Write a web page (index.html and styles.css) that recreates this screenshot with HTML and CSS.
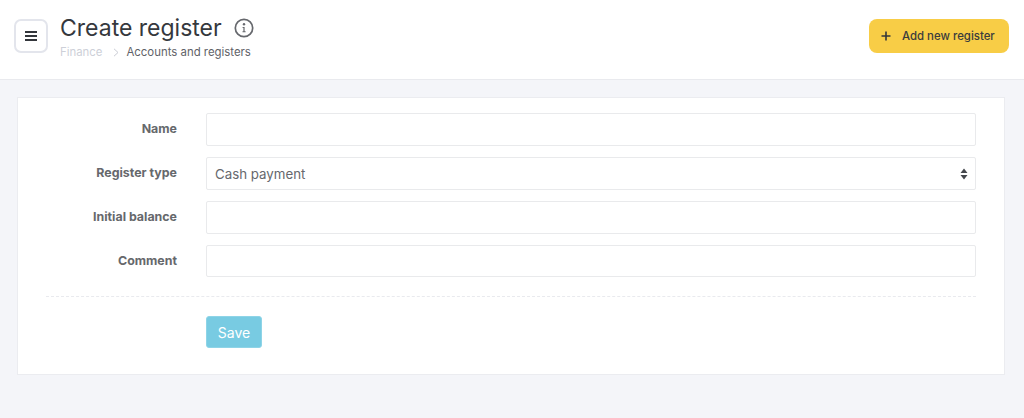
FILE: index.html
```html
<!DOCTYPE html>
<html lang="en">
<head>
<meta charset="utf-8">
<title>Create register</title>
<link rel="stylesheet" href="styles.css">
</head>
<body>
<header class="topbar">
  <button class="menu-btn" type="button" aria-label="Menu">
    <svg width="12" height="10" viewBox="0 0 12 10"><path d="M0 1h12M0 5h12M0 9h12" stroke="#33363b" stroke-width="1.8" fill="none"/></svg>
  </button>
  <div class="heading">
    <div class="title-row">
      <h1 class="title">Create register</h1>
      <svg class="info" width="20" height="20" viewBox="0 0 20 20"><circle cx="10" cy="10" r="8.7" fill="none" stroke="#66686d" stroke-width="1.7"/><circle cx="10" cy="6.3" r="1.2" fill="#66686d"/><path d="M8.6 9h2v4.3h1v1H8.5v-1h.9V10h-.8z" fill="#66686d"/></svg>
    </div>
    <nav class="crumbs">
      <span class="crumb-root">Finance</span>
      <svg class="crumb-sep" width="6" height="9" viewBox="0 0 6 9"><path d="M1 .8 5 4.5 1 8.2" fill="none" stroke="#c9ccd4" stroke-width="1"/></svg>
      <span class="crumb-current">Accounts and registers</span>
    </nav>
  </div>
  <button class="add-btn" type="button">
    <svg width="10" height="10" viewBox="0 0 10 10"><path d="M5 .5v9M.5 5h9" stroke="#33363b" stroke-width="1.6" fill="none"/></svg>
    <span>Add new register</span>
  </button>
</header>
<main class="content">
  <form class="card">
    <div class="row"><label class="label">Name</label><div class="field"></div></div>
    <div class="row"><label class="label">Register type</label>
      <div class="field select"><span>Cash payment</span>
        <svg width="8" height="12" viewBox="0 0 8 12"><path d="M4 .5 7.5 5H.5zM4 11.5.5 7h7z" fill="#44474c"/></svg>
      </div>
    </div>
    <div class="row"><label class="label">Initial balance</label><div class="field"></div></div>
    <div class="row row-last"><label class="label">Comment</label><div class="field"></div></div>
    <div class="divider"></div>
    <div class="actions"><button class="save" type="button">Save</button></div>
  </form>
</main>
</body>
</html>
```
FILE: styles.css
```css
* { box-sizing: border-box; }
html, body { margin: 0; height: 100%; }
body {
  background: #f4f5f9;
  font-family: Inter, "Liberation Sans", sans-serif;
  color: #5f6165;
  overflow: hidden;
}
.topbar {
  height: 80px;
  background: #fff;
  border-bottom: 1px solid #e9eaee;
  display: flex;
  align-items: flex-start;
  padding: 0 15px 0 14px;
}
.menu-btn {
  width: 34px;
  height: 34px;
  margin-top: 19px;
  background: #fff;
  border: 2px solid #e3e5ec;
  border-radius: 7px;
  display: flex;
  align-items: center;
  justify-content: center;
  padding: 0;
}
.heading { margin-left: 12px; padding-top: 12px; flex: 1; }
.title-row { display: flex; align-items: center; height: 32px; }
.title {
  margin: 0;
  font-size: 23px;
  font-weight: 400;
  line-height: 32px;
  color: #35383d;
}
.info { margin-left: 12px; }
.crumbs {
  display: flex;
  align-items: center;
  height: 16px;
  font-size: 11.4px;
  line-height: 16px;
}
.crumb-root { color: #cdd0d8; }
.crumb-sep { margin: 0 8px 0 10px; }
.crumb-current { color: #5f6268; }
.add-btn {
  width: 140px;
  height: 34px;
  margin-top: 19px;
  background: #f8cd46;
  border: 0;
  border-radius: 8px;
  display: flex;
  align-items: center;
  padding: 0 0 0 12px;
  gap: 11px;
  font-family: inherit;
  font-size: 11.4px;
  font-weight: 500;
  color: #3b3c3d;
}
.content { padding: 17px 19px 0 17px; }
.card {
  height: 278px;
  background: #fff;
  border: 1px solid #ebecf0;
  padding: 15px 28px 0 28px;
}
.row {
  display: flex;
  align-items: center;
  height: 33px;
  margin-bottom: 11px;
}
.row-last { height: 32px; }
.label {
  width: 131px;
  margin-right: 29px;
  padding-bottom: 2px;
  text-align: right;
  font-size: 12.4px;
  font-weight: 700;
  color: #66686c;
}
.field {
  flex: 1;
  height: 100%;
  background: #fff;
  border: 1px solid #e9eaec;
  border-radius: 2px;
}
.select {
  display: flex;
  align-items: center;
  justify-content: space-between;
  padding: 0 7px 0 8px;
  font-size: 13.3px;
  color: #66686d;
}
.divider {
  margin-top: 19px;
  border-top: 1px dashed #e9eaee;
}
.actions { padding: 19px 0 0 160px; }
.save {
  width: 56px;
  height: 32px;
  background: #78cbe2;
  border: 1px solid #8ed4e7;
  border-radius: 3px;
  padding: 0;
  font-family: inherit;
  font-size: 14px;
  font-weight: 400;
  color: #fff;
}
```
